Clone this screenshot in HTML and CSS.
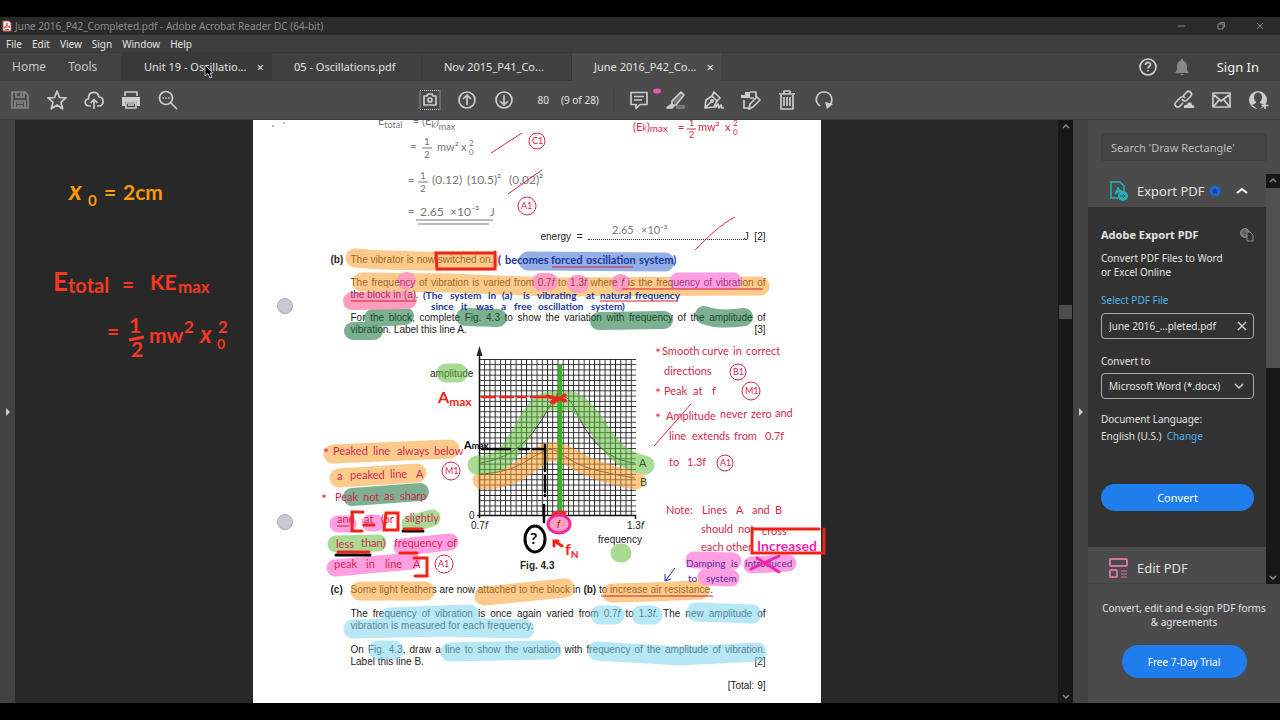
FILE: index.html
```html
<!DOCTYPE html>
<html lang="en">
<head>
<meta charset="utf-8">
<title>June 2016_P42_Completed.pdf - Adobe Acrobat Reader DC (64-bit)</title>
<link rel="stylesheet" href="styles.css">
</head>
<body>
<div class="app">
  <header class="titlebar">
    <svg class="app-icon" viewBox="0 0 10 12"><path d="M1 1h6l2 2v8H1z" fill="#fff" stroke="#d8463c"/><path d="M5 3c0 2-1 4-3 5 2-1 4-1 6-1-2 0-3-2-3-4" fill="none" stroke="#b22" stroke-width=".8"/><path d="M3 9.500h4" stroke="#555"/></svg>
    <span class="title">June 2016_P42_Completed.pdf - Adobe Acrobat Reader DC (64-bit)</span>
    <div class="window-buttons">
      <button aria-label="Minimize"><svg viewBox="0 0 10 10"><path d="M1 5h7"/></svg></button>
      <button aria-label="Restore"><svg viewBox="0 0 10 10"><path d="M2 3h5v5H2zM4 3V1.500h4.500V6H7"/></svg></button>
      <button aria-label="Close"><svg viewBox="0 0 10 10"><path d="M2 2l6 6M8 2l-6 6"/></svg></button>
    </div>
  </header>

  <nav class="menubar">
    <button>File</button><button>Edit</button><button>View</button><button>Sign</button><button>Window</button><button>Help</button>
  </nav>

  <div class="tabs">
    <div class="home-tabs"><button>Home</button><button>Tools</button></div>
    <div class="tab hovered"><button class="tab-name">Unit 19 - Oscillatio...</button><button class="tab-close" aria-label="Close tab">×</button></div>
    <div class="tab"><button class="tab-name">05 - Oscillations.pdf</button></div>
    <div class="tab"><button class="tab-name">Nov 2015_P41_Co...</button></div>
    <div class="tab active"><button class="tab-name">June 2016_P42_Co...</button><button class="tab-close" aria-label="Close tab">×</button></div>
    <div class="account">
      <button aria-label="Help"><svg class="icon" viewBox="0 0 24 24"><circle cx="12" cy="12" r="8"/><path d="M9.500 10c0-3.500 5-3.500 5-.5 0 2-2.500 2-2.500 4M12 15v1.500"/></svg></button>
      <button aria-label="Notifications"><svg class="icon dim" viewBox="0 0 24 24"><path class="solid" d="M5 18c2-1.500 2-3 2-6 0-4 2-6 4-6.500V4h2v1.500c2 .5 4 2.500 4 6.500 0 3 0 4.500 2 6zM10 19h4q-2 2.500-4 0"/></svg></button>
      <button class="signin">Sign In</button>
    </div>
  </div>

  <div class="toolbar">
    <div class="tools">
      <button aria-label="Save"><svg class="icon dim" viewBox="0 0 24 24"><path d="M4 4h13l3 3v13H4zM8 4v5h8V4M13 5v3M7 20v-7h10v7M9 15h6M9 18h6"/></svg></button>
      <button aria-label="Star"><svg class="icon" viewBox="0 0 24 24"><path d="M12 3l2.500 6.500 6.500.4-5 4.300 1.700 6.600L12 17l-5.700 3.800L8 14.200 3 9.900l6.500-.4z"/></svg></button>
      <button aria-label="Upload"><svg class="icon" viewBox="0 0 24 24"><path d="M9 18H7c-5-.5-5-7-.5-7C6 3 16 2 17 9c6 0 5 9 0 9h-2M12 21v-9M8.500 15l3.500-3.500 3.500 3.500"/></svg></button>
      <button aria-label="Print"><svg class="icon" viewBox="0 0 24 24"><path class="solid" d="M3 9h18v9h-3v-4H6v4H3z"/><path d="M6 8V4h12v4M7 15h10v5H7zM9 17h6"/></svg></button>
      <button aria-label="Find"><svg class="icon" viewBox="0 0 24 24"><circle cx="10" cy="10" r="6.500"/><path d="M15 15l6 6M6.500 10h1.500M9.300 10h1.500M12 10h1.500"/></svg></button>
    </div>
    <div class="tools center">
      <button aria-label="Snapshot"><svg class="icon" viewBox="0 0 24 24"><path d="M2 2.500h20v19H2z" stroke-width="1" stroke-dasharray="1 1"/><path d="M6 8h3l1-2h4l1 2h3v9H6z"/><circle cx="12" cy="12" r="2"/></svg></button>
      <button aria-label="Previous page"><svg class="icon" viewBox="0 0 24 24"><circle cx="12" cy="12" r="8"/><path d="M12 17V7M8 11l4-4 4 4"/></svg></button>
      <button aria-label="Next page"><svg class="icon" viewBox="0 0 24 24"><circle cx="12" cy="12" r="8"/><path d="M12 7v10M8 13l4 4 4-4"/></svg></button>
      <div class="pages"><input aria-label="Page number" value="80"><span>(9 of 28)</span></div>
      <button aria-label="Comment"><svg class="icon" viewBox="0 0 24 24"><path d="M4 4.500h16v12h-7l-4 4v-4H4zM7 8.500h10M7 12h8"/></svg></button>
      <button aria-label="Highlight"><svg class="icon" viewBox="0 0 24 24"><path d="M12 17h9v4h-9z" fill="#777" stroke="none"/><path d="M8 13L17 4l3 3-8 10H8zM8 13v4h4" fill="#777"/><path d="M3 20l5-4 2 2-2 2z" fill="#ccc"/></svg></button>
      <button aria-label="Sign document"><svg class="icon" viewBox="0 0 24 24"><path d="M4 20L5 12l6-4 5 5-3 6zM4 20l6-6M11 8l2-4 6 6-3 3M14 20l3-4 1 4 2-3 1 3h2"/><circle cx="11" cy="13" r="1.200"/></svg></button>
      <button aria-label="Organize"><svg class="icon" viewBox="0 0 24 24"><path class="solid" d="M7 4h5v6H3V7h4z"/><path d="M12 4h6v5M6 12v8h6M19 9l3 3-7 7-4 2 1-5zM12 10h4"/></svg></button>
      <button aria-label="Delete"><svg class="icon" viewBox="0 0 24 24"><path d="M4 6h16M9 6V3h6v3M6 7v14h12V7M9 9v9M12 9v9M15 9v9"/></svg></button>
      <button aria-label="Rotate"><svg class="icon" viewBox="0 0 24 24"><path d="M8 18C1 13 5 4 12 4s10 7 6 13"/><path class="solid" d="M13 14l8 2-6 5z"/></svg></button>
    </div>
    <div class="tools right">
      <button aria-label="Share link"><svg class="icon" viewBox="0 0 24 24"><path d="M11 8l4-4c2-2 6 1 4 4l-4 4c-2 2-4 1-5-1M13 10c-1-2-3-2-5 0l-4 4c-3 3 1 7 4 4l3-3"/><path class="solid" d="M12 20c-1-3 2-4 3-3 1-4 5-3 5 0 3 0 3 3 1 3z"/></svg></button>
      <button aria-label="Email"><svg class="icon" viewBox="0 0 24 24"><path d="M4 5h17v14H4zM5 7l7 6 8-6M5 18l5-6M20 18l-5-6"/></svg></button>
      <button aria-label="Add person"><svg class="icon" viewBox="0 0 24 24"><circle cx="12" cy="12" r="9" fill="#ccc" stroke="none"/><path d="M8 9c0-6 8-6 8 0 0 4-2 4-2 6l4 2-5 5-7-5 4-2c0-2-2-2-2-6" fill="#4b4b4b" stroke="none"/><path d="M19 14v7M15.500 17.500h7"/></svg></button>
    </div>
  </div>

  <main class="workspace">
    <button class="pane-toggle" aria-label="Show navigation pane"><svg viewBox="0 0 6 10"><path d="M1 1l4 4-4 4z"/></svg></button>
    <section class="viewer">
      <article class="sheet">
        <p class="answer">energy&nbsp; = &nbsp;<span class="dots"></span>J &nbsp;[2]</p>
        <div class="part"><b>(b)</b>
          <div>
            <p>The vibrator is now switched on.</p>
            <p><span class="full">The frequency of vibration is varied from 0.7<i>f</i> to 1.3<i>f</i> where <i>f</i> is the frequency of vibration of</span>the block in (a).</p>
            <p><span class="full">For the block, complete Fig. 4.3 to show the variation with frequency of the amplitude of</span><span class="row"><span>vibration. Label this line A.</span><span>[3]</span></span></p>
          </div>
        </div>
        <svg class="figure" viewBox="331 345 435 228">
          <defs><pattern id="cell" width="1" height="1" patternUnits="userSpaceOnUse"><path d="M0 0H1M0 0V1" stroke="#222" stroke-width=".36"/></pattern></defs>
          <svg x="479" y="359" width="157" height="157" viewBox="0 0 30 30"><rect width="30.200" height="30.200" fill="url(#cell)"/></svg>
          <path d="M479.500 518V354M477 515.500h159M635.500 515v4" stroke="#111" stroke-width="1.500"/><path d="M479.500 346l3 10h-6z"/>
          <g fill="none" stroke="#333"><path d="M480 463c30-5 45-18 61-42 12-21 15-25 20-25 12 0 15 20 27 37 14 19 28 28 47 30"/><path d="M480 474c25-1 40-8 51-16 18-10 19-10 28-6 15 12 30 17 45 20 12 3 20 4 31 6"/></g>
          <text x="430" y="377">amplitude</text><text x="469" y="519">0</text><text x="471" y="529">0.7<tspan font-style="italic">f</tspan></text><text x="627" y="529">1.3<tspan font-style="italic">f</tspan></text><text x="598" y="543">frequency</text><text x="520" y="569" font-weight="bold">Fig. 4.3</text>
        </svg>
        <div class="part part-c"><b>(c)</b>
          <div>
            <p>Some light feathers are now attached to the block in <b>(b)</b> to increase air resistance.</p>
            <p><span class="full">The frequency of vibration is once again varied from 0.7<i>f</i> to 1.3<i>f</i>. The new amplitude of</span>vibration is measured for each frequency.</p>
            <p><span class="full">On Fig. 4.3, draw a line to show the variation with frequency of the amplitude of vibration.</span><span class="row"><span>Label this line B.</span><span>[2]</span></span></p>
            <p class="total">[Total: 9]</p>
          </div>
        </div>

        <svg class="ink" viewBox="253 120 568 583">
          <g class="marker">
            <g stroke="#fb9f2e" stroke-width="19">
              <path d="M355 258Q400 262 490 261M362 282L450 283 550 287 760 286M333 454L450 449M339 478L417 473M360 591L425 591M484 596L565 588M612 593L650 592 700 590"/>
              <path d="M482 480c28 0 43-12 58-24 14-9 25-2 35 4 17 10 45 18 61 20"/>
            </g>
            <g stroke="#146f38" stroke-width="18"><path d="M373 318L405 316M353 331L374 331M465 317L498 318M599 321L664 320M704 315Q720 321 744 317M352 497L420 492"/></g>
            <g stroke="#64be40" stroke-width="17"><path d="M410 524L432 518M336 544L378 543"/><path d="M446 373h12M620 553h2" stroke-width="19"/><path d="M477 465c28 1 33-15 43-30 12-20 18-34 30-34h22c18 8 28 34 43 49 9 9 20 13 30 15" stroke-width="19"/></g>
            <g stroke="#7fd5ed" stroke-width="19"><path d="M390 617L469 614M353 629L445 627 525 629M378 650L394 650M450 652L552 650M600 615L615 615M641 615L653 615M696 612L752 614M597 651L680 656 757 652"/></g>
            <g stroke="#ff50c8" stroke-width="17"><path d="M338 524h10M370 523h6M402 547L450 542M335 568L412 561M678 281L733 281M694 560L733 561M752 565L788 563M706 577L731 578"/></g>
            <g stroke="#ff4f89" stroke-width="18"><path d="M406 281h1M352 301L408 300M541 282h8M576 284h4M620 283h1M558 524h1"/></g>
            <g stroke="#406dd1" stroke-width="19"><path d="M528 261L665 262"/></g>
          </g>

          <g class="pen gray">
            <text x="378" y="125">E<tspan dy="3" font-size="9">total</tspan><tspan x="410" dy="-3"> = (E</tspan><tspan dy="3" font-size="9">k</tspan><tspan dy="-3">)</tspan><tspan dy="5" font-size="9">max</tspan></text>
            <text x="410" y="150">=</text><text x="424" y="145" font-size="10">1</text><text x="424" y="158" font-size="10">2</text><path d="M422 148h10"/><text x="437" y="151">mw²</text><text x="461" y="151">x</text><text x="469" y="146" font-size="8">2</text><text x="469" y="155" font-size="8">0</text>
            <text x="408" y="184">=</text><text x="420" y="179" font-size="10">1</text><text x="420" y="192" font-size="10">2</text><path d="M418 182h10"/><text x="432" y="184" font-size="12">(0.12)</text><text x="467" y="184" font-size="12">(10.5)²</text><text x="509" y="184" font-size="12">(0.02)²</text>
            <text x="408" y="215">=</text><text x="420" y="216" font-size="12">2.65</text><text x="450" y="216" font-size="12">×10⁻³</text><text x="490" y="216">J</text><path d="M416 220h77M418 224h71"/>
            <text x="612" y="234">2.65</text><text x="641" y="234">×10⁻³</text>
            <path d="M272 126h2M283 123h2"/>
          </g>
          <g fill="#c9c9d2" stroke="#aaaab4"><circle cx="285" cy="306" r="7.500"/><circle cx="285" cy="522" r="7.500"/></g>
          <g class="pen red">
            <text x="633" y="131">(E<tspan font-size="9">k</tspan>)<tspan font-size="10" dy="1">max</tspan></text><text x="678" y="131">=</text><text x="689" y="126" font-size="9">1</text><text x="689" y="138" font-size="9">2</text><path d="M687 129h9"/><text x="698" y="131">mw²</text><text x="725" y="131">x</text><text x="733" y="126" font-size="8">2</text><text x="733" y="135" font-size="8">0</text>
            <path d="M491 153L522 133M508 194L542 170M695 250C710 235 720 225 735 217M654 446L691 404"/>
            <g font-size="9"><circle cx="537" cy="141" r="8"/><text x="532" y="144">C1</text><circle cx="527" cy="206" r="9"/><text x="521" y="209">A1</text><circle cx="738" cy="372" r="8"/><text x="733" y="375">B1</text><circle cx="751" cy="391" r="9"/><text x="745" y="394">M1</text><circle cx="725" cy="463" r="8"/><text x="720" y="466">A1</text><circle cx="451" cy="471" r="9"/><text x="445" y="474">M1</text><circle cx="444" cy="564" r="9"/><text x="438" y="567">A1</text></g>
            <text x="655" y="358" font-size="14">*</text><text x="662" y="355">Smooth</text><text x="702" y="355">curve</text><text x="733" y="355">in</text><text x="746" y="355">correct</text>
            <text x="664" y="375">directions</text>
            <text x="655" y="398" font-size="14">*</text><text x="664" y="395">Peak</text><text x="693" y="395">at</text><text x="712" y="395">f</text>
            <text x="655" y="423" font-size="14">*</text><text x="666" y="420">Amplitude</text><text x="720" y="418">never</text><text x="751" y="418">zero</text><text x="775" y="417">and</text>
            <text x="669" y="440">line</text><text x="692" y="440">extends</text><text x="734" y="440">from</text><text x="765" y="440">0.7f</text>
            <text x="669" y="466">to</text><text x="687" y="466">1.3f</text>
            <text x="666" y="514">Note:</text><text x="702" y="514">Lines</text><text x="736" y="514">A</text><text x="752" y="514">and</text><text x="775" y="514">B</text>
            <text x="701" y="533">should</text><text x="738" y="533">not</text><text x="762" y="535">cross</text><text x="701" y="551">each</text><text x="726" y="551">other</text>
            <text x="323" y="458" font-size="14">*</text><text x="333" y="455">Peaked</text><text x="373" y="455">line</text><text x="397" y="455">always</text><text x="434" y="455">below</text>
            <text x="337" y="480">a</text><text x="350" y="479">peaked</text><text x="390" y="478">line</text><text x="416" y="478">A</text>
            <text x="321" y="504" font-size="14">*</text><text x="335" y="501">Peak</text><text x="363" y="501">not</text><text x="384" y="500">as</text><text x="400" y="500">sharp</text>
            <text x="337" y="523">and</text><text x="364" y="523">at</text><text x="381" y="523">(or</text><text x="405" y="522">slightly</text>
            <text x="336" y="548">less</text><text x="361" y="547">than)</text><text x="394" y="547">frequency</text><text x="447" y="547">of</text>
            <text x="334" y="568">peak</text><text x="366" y="568">in</text><text x="385" y="568">line</text><text x="413" y="568">A</text>
          </g>
          <g class="pen blue">
            <text x="498" y="264">(</text><text x="505" y="264">becomes</text><text x="551" y="264">forced</text><text x="586" y="264">oscillation</text><text x="639" y="264">system)</text>
            <g font-size="10"><text x="423" y="299">(The</text><text x="450" y="299">system</text><text x="488" y="299">in</text><text x="502" y="299">(a)</text><text x="523" y="299">is</text><text x="537" y="299">vibrating</text><text x="586" y="299">at</text><text x="600" y="299">natural</text><text x="635" y="299">frequency</text>
            <text x="431" y="310">since</text><text x="461" y="310">it</text><text x="476" y="310">was</text><text x="501" y="310">a</text><text x="514" y="310">free</text><text x="538" y="310">oscillation</text><text x="591" y="310">system)</text></g>
            <path d="M675 568L666 580M665 574v7l6-2"/>
          </g>
          <g class="pen purple" font-size="10"><text x="686" y="567">Damping</text><text x="731" y="567">is</text><text x="745" y="567">introduced</text><text x="688" y="582">to</text><text x="706" y="582">system</text></g>
          <g class="ruled"><path d="M351 301H416M552 267h81M622 289h141M600 301h78M601 596h112M337 526h12"/></g>
          <g class="pencil black-dash">
            <path d="M482 449h28M519 449h10M533 449h10M545 445v26M545 476v16M545 495v1M544 505v17" stroke-width="2.500"/><path d="M403 531h20M336 555h34"/>
            <ellipse cx="535" cy="539" rx="10" ry="13"/><text x="530" y="544">?</text><text x="464" y="449" font-size="11">A<tspan font-size="9">max</tspan></text>
          </g>
          <g class="pencil bright">
            <path d="M436 253h59v16h-58zM495 252v17M363 512h-11v19h10M364 525h10M386 513h12v17h-14zM404 529h18M338 552h31M400 553h17M414 558h13v18h-12"/>
            <path d="M482 397h13M500 397h13M518 397h8M531 397h17" stroke-width="2.500"/><path d="M547 396l18 5M551 402l14-7M558 394v6"/>
            <path d="M752 529h67M752 530v23h72v-24M556 542l6 4M554 546v-5h4"/>
            <text x="438" y="403">A<tspan dy="3" font-size="12">max</tspan></text><text x="565" y="555">f<tspan dy="3" font-size="10">N</tspan></text>
          </g>
          <path d="M560 366V514" stroke="#35b51c" stroke-width="4" stroke-linecap="round"/>
          <path d="M549 397l16 3M553 403l12-8" stroke="#ee2418" stroke-width="3" stroke-linecap="round"/>
          <g class="pencil magenta"><ellipse cx="559" cy="524" rx="11" ry="9"/><path d="M751 569l28-13M757 558l22 14"/><text x="757" y="551">Increased</text></g>
          <path d="M552 515q7-6 14-1" stroke="#f22" stroke-width="3"/><text x="557" y="528" class="freq">f</text>
          <g class="pen green"><text x="639" y="467">A</text><text x="640" y="486">B</text></g>

          <g class="board orange"><text x="69" y="200" font-style="italic" font-size="26">x</text><text x="88" y="206" font-size="15">0</text><text x="104" y="200">=</text><text x="123" y="200">2cm</text></g>
          <g class="board"><text x="53" y="291" font-size="26">E</text><text x="68" y="293" font-size="20">total</text><text x="122" y="292">=</text><text x="150" y="290">KE</text><text x="178" y="293" font-size="17">max</text>
            <text x="107" y="339">=</text><text x="129" y="333">1</text><text x="131" y="357">2</text><path d="M129 340l15-3"/><text x="149" y="343">mw</text><text x="184" y="333" font-size="17">2</text><text x="200" y="343" font-style="italic" font-size="24">x</text><text x="218" y="333" font-size="17">2</text><text x="217" y="349" font-size="14">0</text></g>
        </svg>
      </article>
    </section>
    <div class="scrollbar doc-scroll"><svg viewBox="0 0 8 8"><path d="M1 5l3-3 3 3"/></svg><i class="thumb"></i><svg viewBox="0 0 8 8"><path d="M1 3l3 3 3-3"/></svg></div>
    <button class="pane-toggle" aria-label="Hide tools pane"><svg viewBox="0 0 6 10"><path d="M1 1l4 4-4 4z"/></svg></button>

    <aside class="sidebar">
      <div class="search"><input type="search" aria-label="Search tools" placeholder="Search 'Draw Rectangle'"></div>
      <div class="panel-row">
        <div class="panels">
          <button class="panel-head"><svg class="panel-icon" viewBox="0 0 20 20"><path d="M9 17H2V1h9l4 4v5M6 13c2-3 3-5 3-7 0 3 2 4 4 4-3 0-5 1-7 3" fill="none" stroke="#23b5bb" stroke-width="1.500"/><circle cx="14" cy="15" r="5" fill="#23b5bb"/><path d="M11 15h5M14 13l2 2-2 2" stroke="#444" fill="none"/></svg><span>Export PDF</span><svg class="badge" viewBox="0 0 12 12"><circle cx="6" cy="6" r="5.500" fill="#1a69dc"/><path d="M6 3l1 2 2 .2-1.500 1.500.5 2.300-2-1-2 1 .5-2.300L3 5.200 5 5z" fill="#153e7c"/></svg><svg class="chevron" viewBox="0 0 12 12"><path d="M1 8l5-4 5 4"/></svg></button>
          <div class="export">
            <div class="export-head"><h2>Adobe Export PDF</h2><svg viewBox="0 0 14 14" fill="none" stroke="#888"><circle cx="5" cy="5" r="4.500" fill="#777"/><path d="M1 5h8M5 1v8M2 2l6 6" stroke="#444" stroke-width=".7"/><path d="M7 4h3l3 3v6H7z" fill="#333"/></svg></div>
            <p class="lead">Convert PDF Files to Word<br>or Excel Online</p>
            <label class="link" for="file">Select PDF File</label>
            <div class="file-box"><input id="file" value="June 2016_...pleted.pdf"><button aria-label="Clear file"><svg viewBox="0 0 12 12"><path d="M2 2l8 8M10 2l-8 8"/></svg></button></div>
            <label class="to-label" for="format">Convert to</label>
            <div class="select-box"><select id="format"><option>Microsoft Word (*.docx)</option></select><svg viewBox="0 0 12 12"><path d="M2 4l4 4 4-4"/></svg></div>
            <p class="language">Document Language:<br>English (U.S.) &nbsp;<a href="#">Change</a></p>
            <button class="primary">Convert</button>
          </div>
          <button class="panel-head edit"><svg class="panel-icon" viewBox="0 0 20 20" fill="none" stroke="#d774a0" stroke-width="2"><rect x="1" y="1" width="17" height="7" rx="1"/><rect x="1" y="12" width="7" height="7" rx="1"/><path d="M12 13h6M12 16h6M12 19h6" stroke-width="1"/></svg><span>Edit PDF</span></button>
        </div>
        <div class="scrollbar side-scroll"><svg viewBox="0 0 8 8"><path d="M1 5l3-3 3 3"/></svg><i class="thumb"></i><svg viewBox="0 0 8 8"><path d="M1 3l3 3 3-3"/></svg></div>
      </div>
      <div class="promo"><p>Convert, edit and e-sign PDF forms<br>&amp; agreements</p><button class="primary trial">Free 7-Day Trial</button></div>
    </aside>
  </main>
  <svg class="dot" viewBox="0 0 8 6"><ellipse cx="4" cy="3" rx="4" ry="2.500" fill="#eb55b5"/></svg>
  <svg class="cursor" viewBox="0 0 10 15"><path d="M1 1v11l3-2.500L6 14l2-1-2-4h3z" fill="#000" stroke="#ddd" stroke-width=".8"/></svg>
</div>
</body>
</html>
```

FILE: styles.css
```css
* { box-sizing: border-box; }
body { margin: 0; background: #000; font-family: "Noto Sans", "Open Sans", sans-serif; font-size: 10px; color: #e2e2e2; }
button, input, select { font: inherit; color: inherit; background: none; border: 0; padding: 0; margin: 0; }
p, h2 { margin: 0; }
a { color: #4db5e8; text-decoration: none; }
.app { position: relative; display: flex; flex-direction: column; height: 100vh; padding: 17px 0; overflow: hidden; }

.titlebar { display: flex; align-items: center; height: 18px; flex: none; background: #2a2a2a; padding: 0 15px 0 2px; gap: 3px; color: #8c8c8c; }
.app-icon { width: 10px; height: 12px; }
.title { flex: 1; white-space: nowrap; }
.window-buttons { display: flex; gap: 29px; }
.window-buttons button { display: flex; width: 10px; }
.window-buttons svg { width: 10px; height: 10px; fill: none; stroke: #888; }
.menubar { display: flex; align-items: center; gap: 10px; height: 17px; flex: none; padding-left: 6px; background: #3e3e3e; }

.tabs { display: flex; height: 29px; flex: none; background: #424242; border-top: 1px solid #383838; font-size: 11px; }
.home-tabs { display: flex; gap: 22px; width: 121px; padding: 0 0 2px 12px; font-size: 12px; color: #c8c8c8; }
.tab { display: flex; align-items: center; width: 150px; padding: 0 7px 0 22px; border-left: 1px solid #3a3a3a; border-bottom: 1px solid #393939; background: #404040; white-space: nowrap; }
.tab-name { flex: 1; text-align: left; }
.hovered { background: #393939; }
.active { background: #4b4b4b; border-bottom-color: #4b4b4b; }
.tab-close { font-size: 13px; }
.account { display: flex; align-items: center; gap: 10px; margin-left: auto; padding-right: 21px; }
.account button { display: flex; }
.account .signin { margin-left: 13px; font-size: 13px; color: #eee; }

.icon { display: block; width: 24px; height: 24px; fill: none; stroke: #ccc; stroke-width: 1.7; stroke-linejoin: round; }
.icon .solid { fill: #ccc; stroke: none; }
.dim { stroke: #888; }
.dim .solid { fill: #888; }
.toolbar { display: grid; grid-template-columns: 1fr auto 1fr; align-items: center; height: 39px; flex: none; padding: 0 10px 0 8px; background: #4b4b4b; border-bottom: 1px solid #3a3a3a; }
.tools { display: flex; align-items: center; gap: 13px; }
.center { margin-right: 24px; }
.right { justify-content: flex-end; }
.pages { display: flex; align-items: center; width: 85px; height: 24px; gap: 8px; border-right: 1px solid #444; white-space: nowrap; }
.pages input { width: 24px; text-align: right; padding-right: 4px; }

.workspace { display: flex; flex: 1; min-height: 0; background: #282828; }
.pane-toggle { width: 15px; flex: none; background: #424242; display: flex; align-items: center; justify-content: center; }
.pane-toggle svg { width: 6px; height: 10px; fill: #ccc; }
.viewer { flex: 1; display: flex; justify-content: center; overflow: hidden; background: #282828; }
.scrollbar { display: flex; flex-direction: column; align-items: center; justify-content: space-between; background: #171717; padding: 3px 0; flex: none; }
.scrollbar svg { width: 8px; height: 8px; fill: none; stroke: #888; stroke-width: 1.5; flex: none; }
.doc-scroll { width: 15px; }
.doc-scroll .thumb { width: 13px; height: 14px; margin-bottom: 200px; background: #4d4d4d; }

.sheet { position: relative; width: 568px; flex: none; background: #fff; color: #1c1c1c; font: 10px/12px "Liberation Sans", Arial, sans-serif; padding: 111px 55px 0 78px; }
.answer { display: flex; padding-left: 210px; margin-bottom: 11px; align-items: baseline; white-space: pre; }
.dots { flex: 1; border-bottom: 1px dotted #333; }
.part { display: grid; grid-template-columns: 20px 1fr; }
.part p + p { margin-top: 11px; }
.part-c p + p { margin-top: 12px; }
.full { display: block; text-align-last: justify; white-space: nowrap; }
.row { display: flex; justify-content: space-between; }
.part .total { text-align: right; }
.figure { display: block; width: 100%; height: 228px; margin: 9px 0 11px; font-size: 10px; fill: #222; }

.ink { position: absolute; left: 0; top: 0; width: 568px; height: 583px; overflow: visible; fill: none; }
.marker { opacity: .55; stroke-linecap: round; stroke-linejoin: round; }
.pen { font-family: Lato, "Noto Sans", sans-serif; font-size: 11px; stroke-width: 1; }
.pen text { stroke: none; }
.gray text { fill: #777; }
.gray { stroke: #777; }
.red text { fill: #d42850; }
.red { stroke: #d42850; }
.blue text { fill: #173aa0; font-weight: bold; }
.blue { stroke: #173aa0; }
.purple { font-size: 10px; }
.purple text { fill: #5b2ba0; }
.green text { fill: #315c2a; }
.ruled { stroke: #d3202c; stroke-width: 1; }
.pencil { stroke-width: 3; stroke-linecap: round; font: bold 16px Lato, sans-serif; }
.pencil text { stroke: none; }
.black-dash { stroke: #050505; }
.black-dash text { fill: #050505; }
.bright { stroke: #ee2418; }
.bright text { fill: #ee2418; }
.magenta { stroke: #ed28a8; font-size: 14px; }
.magenta text { fill: #ed28a8; }
.freq { fill: #a02020; font-style: italic; font-size: 10px; }
.board { font: bold 21px Lato, sans-serif; stroke: #f83820; stroke-width: 3; }
.board text { fill: #f83820; stroke: none; }
.orange text { fill: #ff980d; }

.sidebar { display: flex; flex-direction: column; width: 192px; flex: none; background: #4b4b4b; }
.search { height: 54px; padding: 13px 13px 0; }
.search input { width: 100%; height: 28px; padding: 0 9px; background: #454545; border: 1px solid #424242; border-radius: 2px; font-size: 11px; }
.search input::placeholder { color: #bdbdbd; opacity: 1; }
.panel-row { display: flex; height: 410px; }
.panels { flex: 1; min-width: 0; display: flex; flex-direction: column; }
.side-scroll { width: 14px; }
.side-scroll .thumb { width: 14px; height: 180px; margin-bottom: 202px; background: #505050; }
.panel-head { display: flex; align-items: center; height: 33px; width: 100%; flex: none; padding: 0 18px 0 21px; font-size: 13px; text-align: left; white-space: nowrap; }
.panel-icon { width: 20px; height: 20px; margin-right: 8px; flex: none; }
.badge { width: 12px; height: 12px; margin-left: 4px; flex: none; }
.chevron { width: 12px; height: 12px; margin-left: auto; flex: none; fill: none; stroke: #fff; stroke-width: 2; }
.edit { height: 37px; border-bottom: 1px solid #444; margin-top: auto; padding-top: 5px; }
.export { flex: 1; background: #323232; padding: 20px 12px 0 13px; line-height: 14px; }
.export-head { display: flex; justify-content: space-between; align-items: center; height: 16px; }
.export-head svg { width: 14px; height: 14px; }
.export h2 { font-size: 11px; }
.lead { margin: 8px 0 14px; white-space: nowrap; }
.link { display: block; color: #4db5e8; margin-bottom: 6px; }
.file-box, .select-box { display: flex; align-items: center; height: 26px; border: 1px solid #aaa; border-radius: 4px; padding: 0 5px 0 7px; }
.file-box input, .select-box select { flex: 1; min-width: 0; appearance: none; }
.file-box svg, .select-box svg { display: block; width: 12px; height: 12px; fill: none; stroke: #ccc; stroke-width: 1.5; flex: none; }
.select-box svg { margin-right: 3px; }
.to-label { display: block; margin: 15px 0 5px; }
.language { margin-top: 12px; line-height: 17px; }
.primary { display: block; width: 100%; height: 27px; border-radius: 14px; background: #207dec; color: #fff; font-size: 11px; }
.export .primary { margin-top: 39px; }
.promo { display: flex; flex-direction: column; align-items: center; text-align: center; padding-top: 17px; line-height: 14px; white-space: nowrap; }
.promo .trial { width: 125px; height: 33px; margin-top: 16px; border-radius: 17px; font-size: 10px; }
.dot { position: absolute; left: 653px; top: 88px; width: 8px; height: 6px; }
.cursor { position: absolute; left: 204px; top: 64px; width: 10px; height: 15px; }
```
